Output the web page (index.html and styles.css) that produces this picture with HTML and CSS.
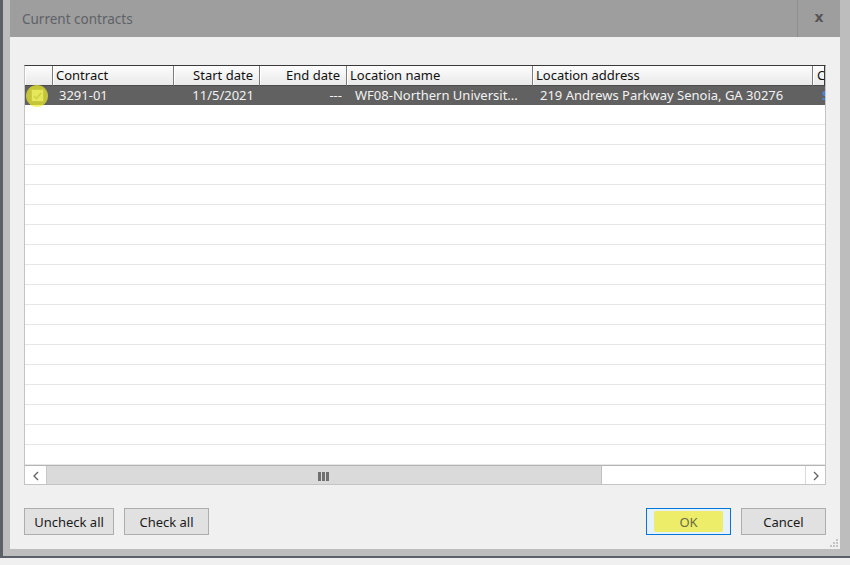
FILE: index.html
```html
<!DOCTYPE html>
<html>
<head>
<meta charset="utf-8">
<link rel="stylesheet" href="styles.css">
</head>
<body>
<div class="screen">
  <div class="frame">
    <div class="window">
      <div class="titlebar">
        <div class="title">Current contracts</div>
        <div class="close">x</div>
      </div>
      <div class="content">
        <div class="grid">
          <div class="row head">
            <div class="cell"></div>
            <div class="cell">Contract</div>
            <div class="cell right">Start date</div>
            <div class="cell right">End date</div>
            <div class="cell">Location name</div>
            <div class="cell">Location address</div>
            <div class="cell clip">C</div>
          </div>
          <div class="row sel">
            <div class="cell chk"><span class="box"><svg width="9" height="8" viewBox="0 0 9 8"><path d="M1 4 L3.5 6.5 L8 1" fill="none" stroke="#8a8a8a" stroke-width="1.6"/></svg></span><span class="hl"></span></div>
            <div class="cell">3291-01</div>
            <div class="cell right">11/5/2021</div>
            <div class="cell right">---</div>
            <div class="cell">WF08-Northern Universit...</div>
            <div class="cell">219 Andrews Parkway Senoia, GA 30276</div>
            <div class="cell clip blue">S</div>
          </div>
          <div class="body-lines">
            <div class="line"></div><div class="line"></div><div class="line"></div><div class="line"></div>
            <div class="line"></div><div class="line"></div><div class="line"></div><div class="line"></div>
            <div class="line"></div><div class="line"></div><div class="line"></div><div class="line"></div>
            <div class="line"></div><div class="line"></div><div class="line"></div><div class="line"></div>
            <div class="line"></div><div class="line"></div>
          </div>
          <div class="hscroll">
            <div class="sbtn left"><svg width="8" height="10" viewBox="0 0 8 10"><path d="M6 1 L2 5 L6 9" fill="none" stroke="#606060" stroke-width="1.3"/></svg></div>
            <div class="thumb"><span class="grip"><i></i><i></i><i></i></span></div>
            <div class="track"></div>
            <div class="sbtn rightb"><svg width="8" height="10" viewBox="0 0 8 10"><path d="M2 1 L6 5 L2 9" fill="none" stroke="#606060" stroke-width="1.3"/></svg></div>
          </div>
        </div>
        <div class="buttons">
          <div class="group">
            <div class="btn wide">Uncheck all</div>
            <div class="btn">Check all</div>
          </div>
          <div class="group">
            <div class="btn ok"><span class="okhl">OK</span></div>
            <div class="btn">Cancel</div>
          </div>
        </div>
        <div class="resize">
          <svg width="10" height="10" viewBox="0 0 10 10" fill="#c4c4c4">
            <rect x="7" y="1" width="2" height="2"/>
            <rect x="4" y="4" width="2" height="2"/><rect x="7" y="4" width="2" height="2"/>
            <rect x="1" y="7" width="2" height="2"/><rect x="4" y="7" width="2" height="2"/><rect x="7" y="7" width="2" height="2"/>
          </svg>
        </div>
      </div>
    </div>
  </div>
</div>
</body>
</html>
```

FILE: styles.css
```css
* { box-sizing: border-box; }
html, body { margin: 0; padding: 0; }
body {
  background: #f0f0f0;
  font-family: "Noto Sans", "Open Sans", sans-serif;
  font-size: 13px;
  color: #1a1a1a;
}
.screen {
  width: 850px;
  height: 565px;
  overflow: hidden;
  background: #f0f0f0;
}
.frame {
  width: 850px;
  height: 558px;
  background: #bdbdbd;
  border-left: 3px solid #5c6067;
  border-bottom: 2px solid #5c6067;
  padding: 0 10px 7px 7px;
}
.window {
  width: 830px;
  height: 549px;
  display: flex;
  flex-direction: column;
  background: #f0f0f0;
}
.titlebar {
  height: 37px;
  background: #9e9e9e;
  display: flex;
  align-items: stretch;
  justify-content: space-between;
}
.title {
  padding-left: 12px;
  display: flex;
  align-items: center;
  font-size: 13.5px;
  color: #5e6266;
}
.close {
  width: 43px;
  border-left: 1px solid #8e8e8e;
  display: flex;
  align-items: center;
  justify-content: center;
  font-family: "DejaVu Sans", sans-serif;
  font-weight: bold;
  font-size: 14px;
  color: #555;
  padding-bottom: 3px;
}
.content {
  flex: 1;
  position: relative;
  padding: 28px 0 0 14px;
}
.grid {
  width: 802px;
  height: 420px;
  background: #fff;
  border: 1px solid #c4c4c4;
  border-top: 1px solid #3a3a3a;
  display: flex;
  flex-direction: column;
  overflow: hidden;
}
.row {
  display: grid;
  grid-template-columns: 28px 121px 86px 87px 186px 280px 12px;
  height: 20px;
  flex: none;
}
.cell {
  white-space: nowrap;
  overflow: hidden;
  line-height: 19px;
  padding: 0 4px;
}
.cell.right { text-align: right; }
.head .cell {
  background: linear-gradient(#fdfdfd, #e9e9e9);
  border-right: 1px solid #7c7c7c;
  border-bottom: 1px solid #4a4a4a;
  box-shadow: inset 1px 0 #ffffff;
  color: #111;
  padding: 0 4px 0 3px;
}
.head .cell.right { padding-right: 6px; }
.head .clip { border-right: 1px solid #3a3a3a; padding: 0 0 0 4px; }
.sel { background: #616161; color: #f2f2f2; height: 19px; }
.sel .cell { line-height: 19px; padding: 0 6px; }
.sel .cell.right { padding-right: 5px; }
.sel .cell:nth-child(3) { padding-right: 6px; }
.sel .cell:nth-child(5) { padding-left: 8px; }
.sel .cell:nth-child(6) { padding-left: 7px; }
.sel .clip { padding: 0 0 0 9px; background: #616161; }
.blue { color: #3a8ee6; font-weight: bold; }
.chk {
  position: relative;
  overflow: visible;
  display: flex;
  align-items: center;
  padding: 0 0 0 7px;
}
.box {
  width: 13px;
  height: 13px;
  background: #d4d4d4;
  border: 1px solid #7a7a7a;
  display: flex;
  align-items: center;
  justify-content: center;
}
.hl {
  position: absolute;
  left: 1px;
  top: -1px;
  width: 22px;
  height: 22px;
  border-radius: 50%;
  background: rgba(240, 240, 40, 0.7);
}
.body-lines {
  flex: 1;
  display: flex;
  flex-direction: column;
}
.line {
  height: 20px;
  flex: none;
  border-bottom: 1px solid #e6e6e6;
}
.hscroll {
  height: 21px;
  flex: none;
  display: flex;
  border-top: 1px solid #b4b4b4;
  background: #fff;
}
.sbtn {
  width: 22px;
  display: flex;
  align-items: center;
  justify-content: center;
  background: #fff;
}
.sbtn.left { border-right: 1px solid #c8c8c8; }
.sbtn.rightb { width: 20px; border-left: 1px solid #dadada; }
.thumb {
  width: 555px;
  background: #dadada;
  border-right: 1px solid #c0c0c0;
  display: flex;
  align-items: center;
  justify-content: center;
}
.grip { display: flex; gap: 1px; margin-left: -2px; }
.grip i { display: block; width: 3px; height: 9px; background: #707070; }
.track { flex: 1; background: #fff; }
.buttons {
  width: 802px;
  margin-top: 23px;
  display: flex;
  justify-content: space-between;
}
.group { display: flex; gap: 10px; }
.btn {
  width: 85px;
  height: 27px;
  border: 1px solid #adadad;
  background: #e1e1e1;
  display: flex;
  align-items: center;
  justify-content: center;
  color: #1a1a1a;
}
.btn.wide { width: 90px; }
.btn.ok {
  border: 1px solid #0078d7;
  background: #e5f1fb;
}
.okhl {
  width: 69px;
  height: 21px;
  background: #eded6a;
  color: #6b6b45;
  display: flex;
  align-items: center;
  justify-content: center;
  border-radius: 2px;
}
.resize {
  position: absolute;
  right: 1px;
  bottom: 1px;
  line-height: 0;
}
```
